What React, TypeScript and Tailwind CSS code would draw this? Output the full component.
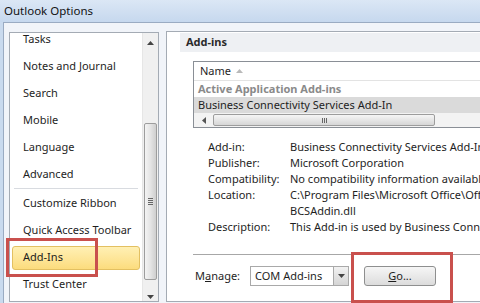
import React from "react";

const items = [
  "Tasks",
  "Notes and Journal",
  "Search",
  "Mobile",
  "Language",
  "Advanced",
];
const items2 = ["Customize Ribbon", "Quick Access Toolbar"];

function Up() {
  return (
    <svg width="7" height="4" viewBox="0 0 7 4">
      <path d="M0 4 L3.5 0 L7 4 Z" fill="#444" />
    </svg>
  );
}
function Down() {
  return (
    <svg width="7" height="4" viewBox="0 0 7 4">
      <path d="M0 0 L3.5 4 L7 0 Z" fill="#444" />
    </svg>
  );
}
function Left() {
  return (
    <svg width="4" height="7" viewBox="0 0 4 7">
      <path d="M4 0 L0 3.5 L4 7 Z" fill="#555" />
    </svg>
  );
}

export default function App() {
  return (
    <div className="relative w-[480px] h-[303px] overflow-hidden bg-[#c9daee] text-[11px] text-[#1e1e1e] font-['Noto_Sans','Segoe_UI',sans-serif]">
      {/* Title bar */}
      <div className="h-[22px] flex items-center pl-[4px] text-[11.5px] text-[#111] bg-linear-to-b from-[#dbe7f5] to-[#c6d8ee]">
        Outlook Options
      </div>

      {/* Content */}
      <div className="ml-[3px] h-[281px] border-l border-t border-[#9aabc2] bg-[#f1f4f9] flex pl-[5px] pt-[9px] gap-[7px]">
        {/* Left list */}
        <div className="w-[150px] h-[270px] shrink-0 border border-[#a4abb4] bg-white flex">
          <div className="flex-1 overflow-hidden">
            <div className="-mt-[7px] flex flex-col pl-[2px] pr-[2px]">
              {items.map((t) => (
                <div key={t} className="h-[27px] flex items-center pl-[11px] whitespace-nowrap">
                  {t}
                </div>
              ))}
              <div className="h-[2px] mx-[2px] border-t border-[#d8dbe0]" />
              {items2.map((t) => (
                <div key={t} className="h-[27px] flex items-center pl-[11px] whitespace-nowrap">
                  {t}
                </div>
              ))}
              <div className="h-[27px] flex items-center py-[2px]">
                <div className="h-[24px] w-full flex items-center pl-[10px] rounded-[3px] border border-[#e3c061] bg-linear-to-b from-[#fff0b4] to-[#fcdc7d]">
                  Add-Ins
                </div>
              </div>
              <div className="h-[27px] flex items-center pl-[11px] whitespace-nowrap">
                Trust Center
              </div>
            </div>
          </div>
          {/* vertical scrollbar */}
          <div className="w-[16px] shrink-0 bg-[#f0f0f0] border-l border-[#e6e6e6] flex flex-col items-center">
            <div className="h-[20px] flex items-center justify-center">
              <Up />
            </div>
            <div className="h-[70px]" />
            <div className="w-[13px] h-[157px] rounded-[2px] border border-[#9d9d9d] bg-linear-to-r from-[#f4f4f4] via-[#e4e4e4] to-[#cfcfcf] flex items-center justify-center">
              <div className="flex flex-col gap-[1px]">
                <div className="w-[5px] h-[1px] bg-[#666]" />
                <div className="w-[5px] h-[1px] bg-[#666]" />
                <div className="w-[5px] h-[1px] bg-[#666]" />
                <div className="w-[5px] h-[1px] bg-[#666]" />
              </div>
            </div>
            <div className="flex-1 flex items-end justify-center pb-[2px]">
              <Down />
            </div>
          </div>
        </div>

        {/* Right panel */}
        <div className="-mt-[1px] w-[330px] h-[271px] shrink-0 border border-[#a4abb4] bg-white pl-[13px] pt-[1px] overflow-hidden">
          <div className="h-[19px] flex items-center pl-[6px] font-bold text-[#2a2a2a] bg-[#eef0f3]">
            Add-ins
          </div>
          <div className="pl-[13px] pt-[9px]">
            {/* table */}
            <div className="border border-[#8a8f96] border-r-0 bg-white">
              <div className="h-[19px] flex items-center pl-[6px] gap-[5px] border-b border-[#e3e3e3]">
                <span>Name</span>
                <svg width="7" height="4" viewBox="0 0 7 4">
                  <path d="M0 4 L3.5 0 L7 4 Z" fill="#b9b9b9" />
                </svg>
              </div>
              <div className="h-[16px] flex items-center pl-[4px] font-bold text-[#8a8a8a] whitespace-nowrap">
                Active Application Add-ins
              </div>
              <div className="h-[16px] flex items-center pl-[4px] bg-[#dadada] whitespace-nowrap">
                Business Connectivity Services Add-In
              </div>
              <div className="h-[14px] flex items-center bg-[#f3f3f3]">
                <div className="w-[19px] flex justify-center">
                  <Left />
                </div>
                <div className="w-[222px] h-[12px] rounded-[2px] border border-[#9d9d9d] bg-linear-to-b from-[#f6f6f6] to-[#d6d6d6] flex items-center justify-center">
                  <div className="flex gap-[1px]">
                    <div className="w-[1px] h-[5px] bg-[#666]" />
                    <div className="w-[1px] h-[5px] bg-[#666]" />
                    <div className="w-[1px] h-[5px] bg-[#666]" />
                  </div>
                </div>
              </div>
            </div>

            {/* details */}
            <div className="mt-[11px] pl-[15px] grid grid-cols-[82px_1fr] auto-rows-[16px] items-center whitespace-nowrap">
              <div>Add-in:</div>
              <div>Business Connectivity Services Add-In</div>
              <div>Publisher:</div>
              <div>Microsoft Corporation</div>
              <div>Compatibility:</div>
              <div>No compatibility information available</div>
              <div>Location:</div>
              <div>C:\Program Files\Microsoft Office\Office14\ADDINS\</div>
              <div></div>
              <div>BCSAddin.dll</div>
              <div>Description:</div>
              <div>This Add-in is used by Business Connectivity Services.</div>
            </div>

            {/* separator */}
            <div className="mt-[19px] h-[2px] border-t border-[#a7a7a7] bg-white" />

            {/* manage row */}
            <div className="mt-[10px] flex items-center pl-[2px]">
              <div className="w-[55px]">
                M<span className="underline">a</span>nage:
              </div>
              <div className="flex h-[20px] border border-[#a9a9a9]">
                <div className="w-[82px] flex items-center pl-[4px] whitespace-nowrap">COM Add-ins</div>
                <div className="w-[15px] flex items-center justify-center border-l border-[#a9a9a9] bg-linear-to-b from-[#f2f2f2] to-[#d5d5d5]">
                  <Down />
                </div>
              </div>
              <div className="ml-[15px] w-[72px] h-[20px] rounded-[3px] border border-[#8e8f8f] bg-linear-to-b from-[#f6f6f6] to-[#dcdcdc] flex items-center justify-center">
                <span>
                  <span className="underline">G</span>o...
                </span>
              </div>
            </div>
          </div>
        </div>
      </div>

      {/* annotation boxes */}
      <div className="absolute left-[6px] top-[238px] w-[92px] h-[39px] border-[3px] border-[#c9504d]" />
      <div className="absolute left-[351px] top-[252px] w-[102px] h-[51px] border-[3px] border-[#c9504d]" />
    </div>
  );
}
